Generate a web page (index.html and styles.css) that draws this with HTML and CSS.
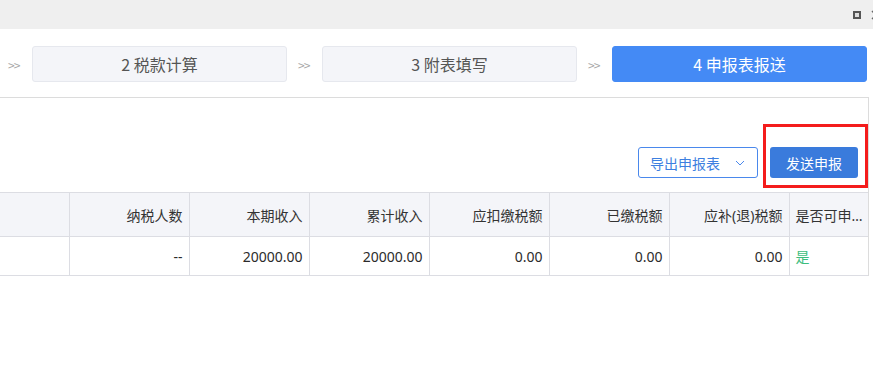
FILE: index.html
```html
<!DOCTYPE html>
<html lang="zh-CN">
<head>
  <meta charset="UTF-8" />
  <meta name="viewport" content="width=device-width, initial-scale=1.0"/>
  <title>申报表报送</title>
  <link rel="stylesheet" href="styles.css">
</head>
<body>

  <div class="titlebar">
    <span class="win-restore"></span>
    <svg class="win-close" width="10" height="10" viewBox="0 0 10 10">
      <path d="M1 1 L9 9 M9 1 L1 9" stroke="#666" stroke-width="1.5"/>
    </svg>
  </div>

  <div class="steps">
    <div class="step">
      <span class="arrow">&gt;&gt;</span>
      <div class="step-box">2 税款计算</div>
    </div>
    <div class="step">
      <span class="arrow">&gt;&gt;</span>
      <div class="step-box">3 附表填写</div>
    </div>
    <div class="step">
      <span class="arrow">&gt;&gt;</span>
      <div class="step-box active">4 申报表报送</div>
    </div>
  </div>

  <div class="panel">
    <div class="toolbar">
      <button class="btn-outline">
        导出申报表
        <svg class="chevron" width="10" height="6" viewBox="0 0 10 6">
          <path d="M1 1 L5 5 L9 1" fill="none" stroke="#4a88ec" stroke-width="1"/>
        </svg>
      </button>
      <div class="send-wrap">
        <button class="btn-primary">发送申报</button>
      </div>
    </div>

    <table class="grid">
      <colgroup>
        <col style="width:69px">
        <col style="width:120px">
        <col style="width:120px">
        <col style="width:120px">
        <col style="width:120px">
        <col style="width:120px">
        <col style="width:120px">
        <col style="width:79px">
      </colgroup>
      <thead>
        <tr>
          <th></th>
          <th>纳税人数</th>
          <th>本期收入</th>
          <th>累计收入</th>
          <th>应扣缴税额</th>
          <th>已缴税额</th>
          <th>应补(退)税额</th>
          <th class="left">是否可申报</th>
        </tr>
      </thead>
      <tbody>
        <tr>
          <td></td>
          <td>--</td>
          <td>20000.00</td>
          <td>20000.00</td>
          <td>0.00</td>
          <td>0.00</td>
          <td>0.00</td>
          <td class="left yes">是</td>
        </tr>
      </tbody>
    </table>
  </div>

</body>
</html>
```

FILE: styles.css
```css
body {
  font-family: "Noto Sans CJK SC", "Noto Sans", sans-serif;
  margin: 0;
  padding: 0;
  background: #fff;
  color: #333;
  overflow: hidden;
}

.titlebar {
  height: 29px;
  background: #efefef;
  display: flex;
  align-items: center;
  justify-content: flex-end;
  overflow: hidden;
}

.win-restore {
  width: 4px;
  height: 4px;
  border: 2px solid #555;
  background: #ddd;
}

.win-close {
  flex: none;
  margin-left: 10px;
  margin-right: -8px;
}

.steps {
  display: flex;
  padding: 17px 0 15px 8px;
}

.step {
  display: flex;
  align-items: center;
  margin-right: 11px;
}

.step:last-child {
  margin-right: 0;
}

.arrow {
  width: 14px;
  margin-right: 10px;
  font-size: 12px;
  letter-spacing: -1px;
  color: #a8a8a8;
}

.step-box {
  width: 253px;
  height: 34px;
  line-height: 34px;
  text-align: center;
  font-size: 16px;
  color: #555;
  background: #f4f5f9;
  border: 1px solid #e6e8ee;
  border-radius: 3px;
}

.step-box.active {
  background: #448af5;
  border-color: #448af5;
  color: #fff;
}

.panel {
  width: 868px;
  border-top: 1px solid #dcdcdc;
  border-right: 1px solid #dcdcdc;
}

.toolbar {
  display: flex;
  justify-content: flex-end;
  gap: 12px;
  padding: 49px 10px 0 0;
}

.btn-outline {
  width: 120px;
  height: 31px;
  padding: 0 0 0 11px;
  display: flex;
  align-items: center;
  font-family: inherit;
  font-size: 14px;
  color: #3d7fe0;
  background: #fff;
  border: 1px solid #4a88ec;
  border-radius: 3px;
}

.chevron {
  margin-left: 15px;
}

.send-wrap {
  position: relative;
}

.send-wrap::after {
  content: "";
  position: absolute;
  top: -23px;
  left: -7px;
  right: -10px;
  bottom: -10px;
  border: 3px solid #f41c1c;
  pointer-events: none;
}

.btn-primary {
  width: 88px;
  height: 31px;
  font-family: inherit;
  font-size: 14px;
  color: #fff;
  background: #3a7bdc;
  border: none;
  border-radius: 3px;
}

.grid {
  margin-top: 14px;
  width: 868px;
  table-layout: fixed;
  border-collapse: collapse;
  font-family: "Noto Sans", "Noto Sans CJK SC", sans-serif;
  font-size: 14px;
  color: #2b2b2b;
}

.grid th,
.grid td {
  padding: 0 6px;
  text-align: right;
  border-top: 1px solid #dcdde3;
  border-bottom: 1px solid #dcdde3;
  border-right: 1px solid #dcdde3;
  white-space: nowrap;
  overflow: hidden;
  text-overflow: ellipsis;
}

.grid th:last-child,
.grid td:last-child {
  border-right: none;
  padding-right: 5px;
}

.grid th {
  height: 43px;
  font-weight: normal;
  background: #f4f5f9;
  color: #333;
}

.grid td {
  height: 38px;
}

.grid .left {
  text-align: left;
}

.yes {
  color: #3dbd7d;
}
```
